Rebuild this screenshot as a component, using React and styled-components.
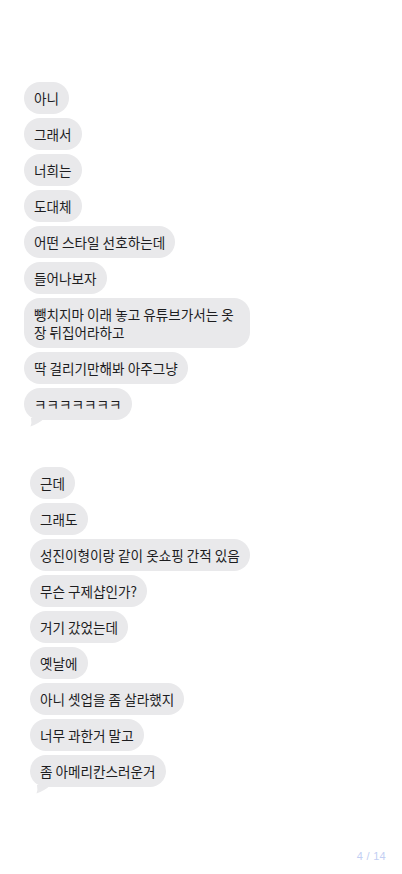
import React from "react";
import styled, { createGlobalStyle } from "styled-components";

const Global = createGlobalStyle`
  html, body { margin: 0; padding: 0; background: #ffffff; }
  body { font-family: "Noto Sans CJK KR", "Noto Sans", sans-serif; }
  * { box-sizing: border-box; }
`;

const Page = styled.div`
  width: 402px;
  min-height: 874px;
  display: flex;
  flex-direction: column;
  padding-top: 82px;
`;

const Group = styled.div`
  display: flex;
  flex-direction: column;
  align-items: flex-start;
  gap: 4px;
  padding-left: ${(p) => p.$indent}px;
  margin-top: ${(p) => p.$top || 0}px;
`;

const Bubble = styled.div`
  position: relative;
  max-width: 226px;
  background: #e9e9eb;
  color: #1d1d1f;
  font-size: 13.6px;
  line-height: 18px;
  padding: 7px 10px;
  border-radius: 16px;
`;

const Tail = styled.svg`
  position: absolute;
  left: 5px;
  bottom: -7px;
  width: 18px;
  height: 9px;
`;

const Footer = styled.div`
  margin-top: auto;
  align-self: flex-end;
  padding: 0 16px 12px 0;
  font-family: "Liberation Sans", Arial, sans-serif;
  font-size: 11px;
  color: #c3cff3;
  letter-spacing: 0.3px;
`;

const groupA = [
  "아니",
  "그래서",
  "너희는",
  "도대체",
  "어떤 스타일 선호하는데",
  "들어나보자",
  "뺑치지마 이래 놓고 유튜브가서는 옷장 뒤집어라하고",
  "딱 걸리기만해봐 아주그냥",
  "ㅋㅋㅋㅋㅋㅋㅋ",
];

const groupB = [
  "근데",
  "그래도",
  "성진이형이랑 같이 옷쇼핑 간적 있음",
  "무슨 구제샵인가?",
  "거기 갔었는데",
  "옛날에",
  "아니 셋업을 좀 살라했지",
  "너무 과한거 말고",
  "좀 아메리칸스러운거",
];

function Messages({ items }) {
  return items.map((t, i) => (
    <Bubble key={i}>
      {t}
      {i === items.length - 1 && (
        <Tail viewBox="0 0 18 9">
          <path d="M2 0 Q3 5 1.5 8.5 Q9 6 16 0 Z" fill="#e9e9eb" />
        </Tail>
      )}
    </Bubble>
  ));
}

export default function App() {
  return (
    <Page>
      <Global />
      <Group $indent={24}>
        <Messages items={groupA} />
      </Group>
      <Group $indent={30} $top={47}>
        <Messages items={groupB} />
      </Group>
      <Footer>4 / 14</Footer>
    </Page>
  );
}
